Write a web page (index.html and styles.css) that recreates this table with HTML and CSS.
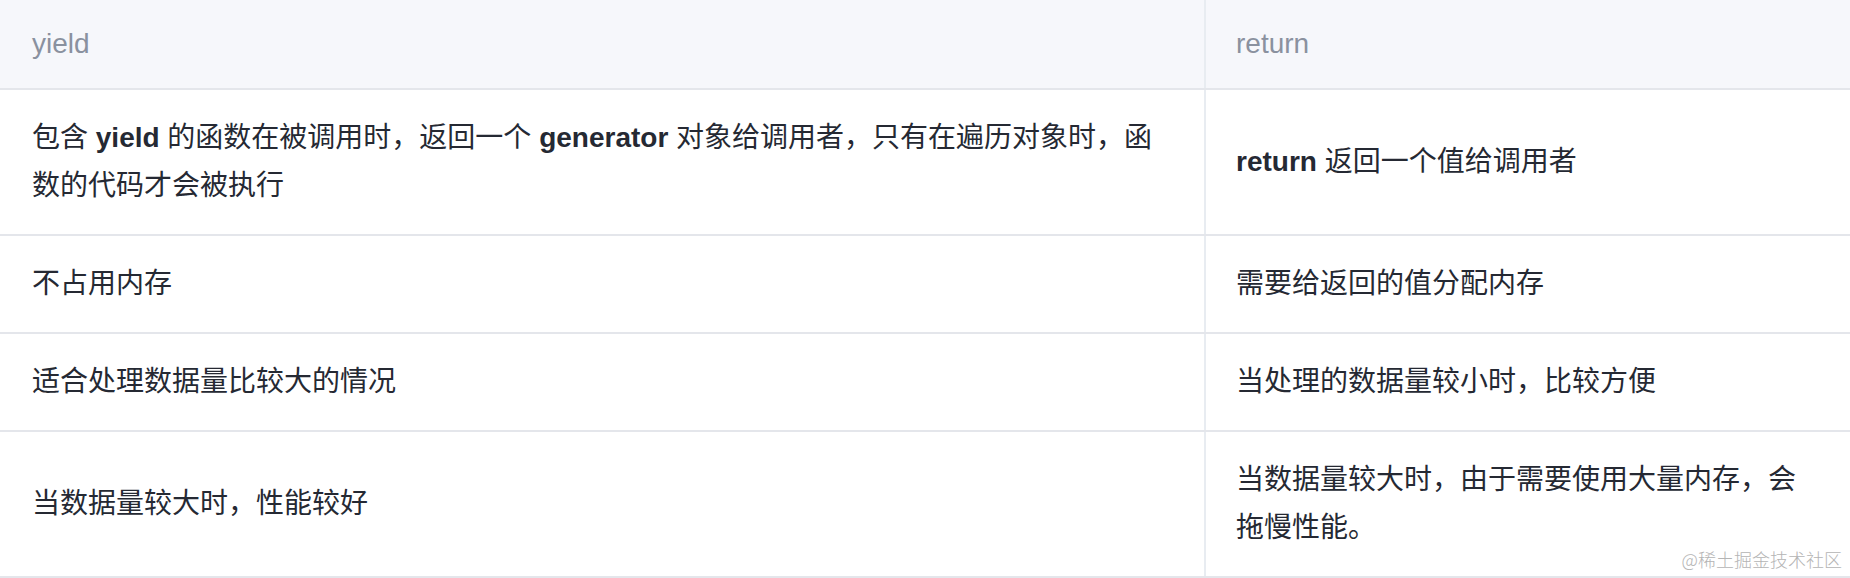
FILE: index.html
```html
<!DOCTYPE html>
<html lang="zh-CN">
<head>
<meta charset="utf-8">
<title>yield vs return</title>
<link rel="stylesheet" href="styles.css">
</head>
<body>
<div class="page">
  <table class="cmp">
    <colgroup>
      <col class="col-a">
      <col class="col-b">
    </colgroup>
    <thead>
      <tr><th>yield</th><th>return</th></tr>
    </thead>
    <tbody>
      <tr>
        <td>包含 <strong>yield</strong> 的函数在被调用时，返回一个 <strong>generator</strong> 对象给调用者，只有在遍历对象时，函数的代码才会被执行</td>
        <td><strong>return</strong> 返回一个值给调用者</td>
      </tr>
      <tr>
        <td>不占用内存</td>
        <td>需要给返回的值分配内存</td>
      </tr>
      <tr>
        <td>适合处理数据量比较大的情况</td>
        <td>当处理的数据量较小时，比较方便</td>
      </tr>
      <tr>
        <td>当数据量较大时，性能较好</td>
        <td>当数据量较大时，由于需要使用大量内存，会拖慢性能。</td>
      </tr>
    </tbody>
  </table>
  <div class="watermark">@稀土掘金技术社区</div>
</div>
</body>
</html>
```
FILE: styles.css
```css
html, body {
  margin: 0;
  padding: 0;
  background: #ffffff;
}

.page {
  position: relative;
  width: 1850px;
  height: 578px;
  overflow: hidden;
  font-family: "Liberation Sans", "Noto Sans CJK SC", sans-serif;
}

.cmp {
  width: 1850px;
  border-collapse: collapse;
  table-layout: fixed;
  font-size: 28px;
  line-height: 48px;
  color: #252933;
}

.col-a { width: 1205px; }
.col-b { width: 645px; }

.cmp th {
  background: #f6f7fb;
  color: #8a919f;
  font-weight: normal;
  text-align: left;
  padding: 20px 40px 20px 32px;
  border-bottom: 2px solid #e4e6eb;
}

.cmp td {
  padding: 24px 42px 24px 32px;
  border-bottom: 2px solid #e4e6eb;
  vertical-align: middle;
}

.cmp th + th,
.cmp td + td {
  border-left: 2px solid #e8ecf1;
  padding-left: 30px;
  padding-right: 40px;
}

.cmp strong {
  font-weight: bold;
  color: #252933;
}

.watermark {
  position: absolute;
  right: 8px;
  bottom: 9px;
  font-size: 18px;
  line-height: 20px;
  color: #b4b4b4;
  font-family: "Noto Sans CJK SC", sans-serif;
  font-weight: 300;
}
```
